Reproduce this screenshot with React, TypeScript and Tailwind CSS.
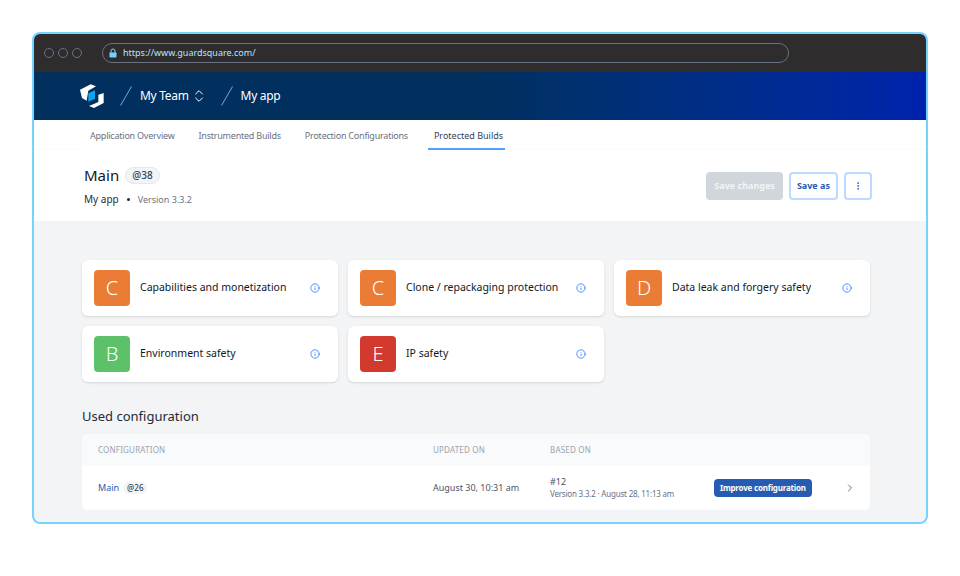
import { ChevronRight, ChevronsUpDown, Info, MoreVertical } from 'lucide-react';

const scores = [
  { grade: 'C', label: 'Capabilities and monetization', color: 'bg-[#ea7c35]' },
  { grade: 'C', label: 'Clone / repackaging protection', color: 'bg-[#ea7c35]' },
  { grade: 'D', label: 'Data leak and forgery safety', color: 'bg-[#ea7c35]' },
  { grade: 'B', label: 'Environment safety', color: 'bg-[#5cc169]' },
  { grade: 'E', label: 'IP safety', color: 'bg-[#d23a2e]' },
];

const tabs = ['Application Overview', 'Instrumented Builds', 'Protection Configurations'];

const Logo = () => (
  <svg viewBox="30 28 72 72" className="h-6 w-6">
    <path d="M30 45 L62 29 L78 35 L55 48 L50 78 L36 70 Z" fill="#fff" />
    <path d="M101 55 L101 85 L72 100 L57 94 L85 82 L85 60 Z" fill="#fff" />
    <path d="M55 56 L75 47 L75 72 L55 81 Z" fill="#0ea5e9" />
  </svg>
);

const Slash = () => (
  <svg viewBox="0 0 12 20" className="h-5 w-3 text-sky-300" fill="none" stroke="currentColor" strokeWidth="0.8">
    <path d="M11.5 0.5 L0.5 19.5" />
  </svg>
);

const LockIcon = () => (
  <svg viewBox="0 0 8 10" className="h-2.5 w-2 text-sky-300" fill="none" stroke="currentColor">
    <path d="M2 5 V3 a2 2 0 0 1 4 0 V5" />
    <rect x="0.5" y="4.5" width="7" height="5" rx="0.8" fill="currentColor" stroke="none" />
  </svg>
);

const ScoreCard = ({ grade, label, color }: { grade: string; label: string; color: string }) => (
  <div className="flex h-14 items-center rounded-md bg-white pl-3 pr-4.5 shadow-sm">
    <div className={`flex h-9 w-9 items-center justify-center rounded-sm text-xl font-light text-white ${color}`}>{grade}</div>
    <span className="ml-2.5 flex-1 text-[10.5px] text-gray-900">{label}</span>
    <Info className="h-2.5 w-2.5 text-blue-500" />
  </div>
);

export default function App() {
  return (
    <div className="h-screen overflow-hidden bg-white px-8 pt-8 font-['Noto_Sans',sans-serif]">
      <div className="overflow-hidden rounded-lg border-2 border-sky-300 bg-gray-100">
        <div className="flex h-9.5 items-center bg-[#2e2c2c] pl-2.5">
          <div className="flex gap-1">
            <span className="h-2.5 w-2.5 rounded-full border border-gray-500" />
            <span className="h-2.5 w-2.5 rounded-full border border-gray-500" />
            <span className="h-2.5 w-2.5 rounded-full border border-gray-500" />
          </div>
          <div className="ml-5 flex h-5 w-[687px] items-center gap-1.5 rounded-full border border-gray-500 px-1.5">
            <LockIcon />
            <span className="text-[9px] text-sky-200">https://www.guardsquare.com/</span>
          </div>
        </div>

        <div className="flex h-12 items-center bg-linear-to-r from-[#01305f] from-50% to-[#0022ad] pl-11.5 text-white">
          <Logo />
          <span className="ml-4"><Slash /></span>
          <span className="ml-2 text-xs tracking-tight">My Team</span>
          <ChevronsUpDown className="ml-0.5 h-4 w-4" strokeWidth={1.5} />
          <span className="ml-3.5"><Slash /></span>
          <span className="ml-2 text-xs tracking-tight">My app</span>
        </div>

        <div className="flex h-7.5 bg-white text-[9px] text-gray-500">
          <div className="w-11 border-b border-gray-50" />
          <div className="flex items-center gap-6 pl-3 pr-5 pt-0.5 tracking-tight">
            {tabs.map((t) => (
              <span key={t}>{t}</span>
            ))}
          </div>
          <div className="flex items-center border-b-2 border-blue-400 pl-1.5 pr-0.5 pt-1 text-gray-700">Protected Builds</div>
          <div className="flex-1 border-b border-gray-50" />
        </div>

        <div className="flex h-18 items-center justify-between border-b border-gray-100 bg-white pl-12.5 pr-13.5">
          <div className="flex flex-col gap-1.5">
            <div className="flex items-center gap-1.5">
              <span className="text-[15px] text-gray-900">Main</span>
              <span className="rounded-full border border-gray-200 bg-gray-100 px-1.5 text-[10px] font-medium text-gray-700">@38</span>
            </div>
            <div className="flex items-center gap-2 text-[10px]">
              <span className="text-gray-800">My app</span>
              <span className="h-0.75 w-0.75 rounded-full bg-gray-800" />
              <span className="text-[9px] text-gray-500">Version 3.3.2</span>
            </div>
          </div>
          <div className="flex gap-1.5 text-[9px] font-bold">
            <span className="flex h-7 items-center rounded-sm bg-gray-300 px-2 text-gray-100">Save changes</span>
            <span className="flex h-7 items-center rounded-sm border-2 border-blue-200 bg-white px-1.5 text-[#255bb0]">Save as</span>
            <span className="flex h-7 w-7 items-center justify-center rounded-sm border-2 border-blue-200 bg-white text-[#255bb0]">
              <MoreVertical className="h-2.5 w-2.5" />
            </span>
          </div>
        </div>

        <div className="pb-3 pl-12 pr-14 pt-9.5">
          <div className="grid grid-cols-3 gap-x-2.5 gap-y-2.5">
            {scores.map((s) => (
              <ScoreCard key={s.label} {...s} />
            ))}
          </div>

          <h2 className="mt-6 text-[13px] leading-5 text-gray-800">Used configuration</h2>

          <div className="mt-2 overflow-hidden rounded-md bg-white">
            <div className="grid h-8 grid-cols-[335px_117px_1fr] items-center bg-gray-50 pl-4 text-[8px] tracking-wide text-gray-400">
              <span>CONFIGURATION</span>
              <span>UPDATED ON</span>
              <span>BASED ON</span>
            </div>
            <div className="grid h-11 grid-cols-[335px_117px_164px_1fr] items-center pl-4">
              <div className="flex items-center gap-1">
                <span className="text-[9px] text-[#255bb0]">Main</span>
                <span className="rounded-full bg-gray-100 px-1 text-[8px] font-medium text-gray-700">@26</span>
              </div>
              <span className="text-[9px] text-gray-600">August 30, 10:31 am</span>
              <div className="flex flex-col">
                <span className="text-[9px] leading-3 text-gray-600">#12</span>
                <span className="text-[8px] leading-3 tracking-tight text-gray-500">Version 3.3.2 · August 28, 11:13 am</span>
              </div>
              <div className="flex items-center justify-between pr-3.5">
                <span className="flex h-4.5 items-center rounded-sm bg-[#255bb0] px-1.5 text-[8px] font-bold tracking-tight text-white">Improve configuration</span>
                <ChevronRight className="h-3 w-3 text-gray-500" />
              </div>
            </div>
          </div>
        </div>
      </div>
    </div>
  );
}
